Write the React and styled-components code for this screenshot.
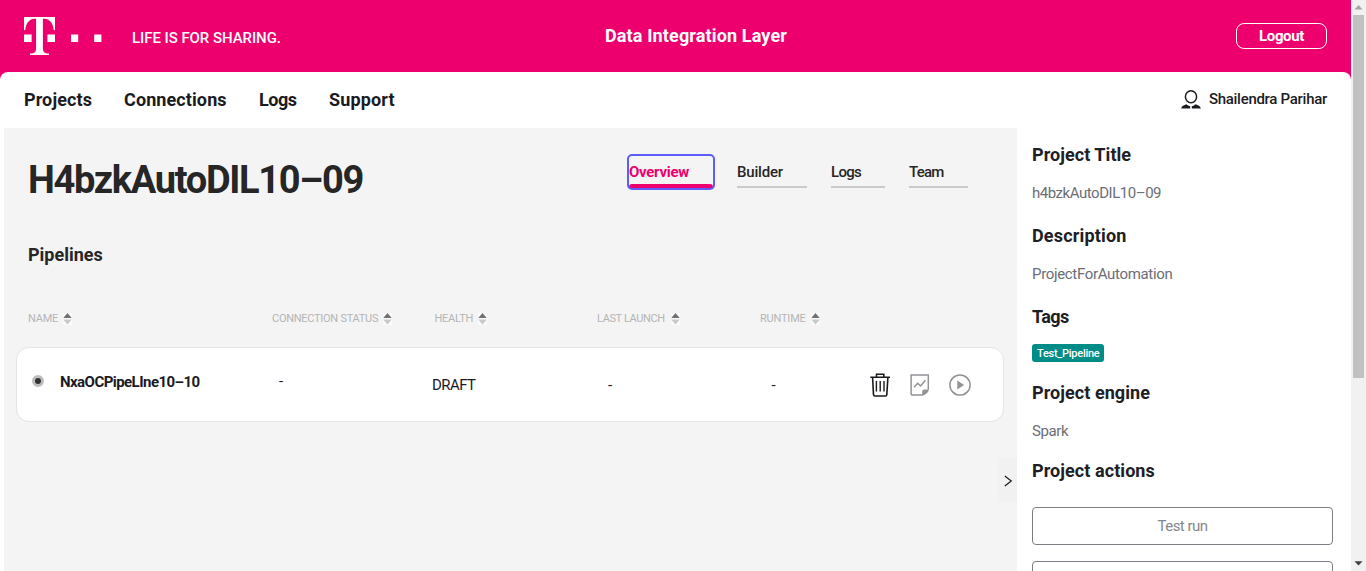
import React from "react";
import styled, { createGlobalStyle, css } from "styled-components";

const magenta = "#ed006e";
const ink = "#262626";

const GlobalStyle = createGlobalStyle`
  *, *::before, *::after { box-sizing: border-box; }
  body { margin: 0; background: #fff; overflow: hidden; font-family: Roboto, "Liberation Sans", sans-serif; color: ${ink}; }
  h1, h2, h3, p { margin: 0; }
  svg { display: block; flex: none; }
`;

const tracking = css`
  letter-spacing: ${(p) => p.$ls || 0}px;
  white-space: nowrap;
`;

const Page = styled.div`
  display: flex;
  width: 1366px;
  height: 571px;
  overflow: hidden;
`;
const Content = styled.div`
  flex: 1;
  display: flex;
  flex-direction: column;
  background: ${magenta};
`;

const Header = styled.header`
  display: grid;
  grid-template-columns: 1fr auto 1fr;
  align-items: center;
  height: 72px;
  padding: 0 24px;
  color: #fff;
`;
const Brand = styled.div`
  display: flex;
  align-items: center;
  gap: 30px;
`;
const Tagline = styled.span`
  font: 500 15px/20px Roboto, sans-serif;
  padding-top: 4px;
  ${tracking}
`;
const AppName = styled.h2`
  font-size: 18px;
  font-weight: 700;
  line-height: 24px;
  padding-left: 41px;
  ${tracking}
`;
const LogoutButton = styled.button`
  justify-self: end;
  width: 91px;
  height: 26px;
  padding: 0;
  border: 1px solid #fff;
  border-radius: 8px;
  background: none;
  color: #fff;
  font: 700 15px/20px Roboto, sans-serif;
  ${tracking}
`;

const Nav = styled.nav`
  display: flex;
  align-items: center;
  justify-content: space-between;
  height: 56px;
  padding: 0 24px;
  border-radius: 8px 8px 0 0;
  background: #fff;
  flex: none;
`;
const NavLinks = styled.div`
  display: flex;
`;
const NavLink = styled.a`
  width: ${(p) => p.$w}px;
  font-size: 18px;
  font-weight: 700;
  line-height: 24px;
  color: #1b1b1f;
  ${tracking}
`;
const User = styled.div`
  display: flex;
  align-items: center;
  gap: 8px;
`;
const UserName = styled.span`
  padding-bottom: 2px;
  font: 500 15px/20px Roboto, sans-serif;
  color: #1b1b1f;
  ${tracking}
`;

const Body = styled.div`
  flex: 1;
  min-height: 0;
  display: flex;
  padding-left: 4px;
  background: #fff;
`;
const Main = styled.main`
  width: 1013px;
  display: flex;
  flex-direction: column;
  background: #f4f4f4;
  padding: 28px 0 0;
`;
const TitleRow = styled.div`
  display: flex;
  justify-content: space-between;
  padding: 0 49px 0 24px;
`;
const ProjectName = styled.h1`
  font-size: 38px;
  font-weight: 700;
  line-height: 48px;
  ${tracking}
`;
const Tabs = styled.div`
  display: flex;
  align-items: flex-start;
  gap: 24px;
`;
const Tab = styled.a`
  width: ${(p) => p.$w}px;
  height: 32px;
  padding-top: 6px;
  border-bottom: 2px solid #cacaca;
  font: 500 15px/20px Roboto, sans-serif;
  ${tracking}
  ${(p) =>
    p.$active &&
    css`
      color: ${magenta};
      font-weight: 700;
      border: 0;
      border-radius: 3px;
      outline: 2px solid #5c5cff;
      display: flex;
      flex-direction: column;
      justify-content: space-between;
      &::after {
        content: "";
        height: 4px;
        border-radius: 3px 3px 0 0;
        background: ${magenta};
      }
    `}
`;
const SectionTitle = styled.h2`
  margin: 39px 0 0 24px;
  font-size: 18px;
  font-weight: 700;
  line-height: 24px;
  ${tracking}
`;
const TableHead = styled.div`
  display: grid;
  grid-template-columns: 244px 162.5px 162.5px 163px 1fr;
  margin: 45px 0 0 24px;
`;
const HeadCell = styled.div`
  display: flex;
  gap: ${(p) => p.$gap || 5}px;
  font-size: 11px;
  line-height: 14px;
  color: #b5b5b5;
  ${tracking}
`;
const SortBox = styled.span`
  display: block;
  width: 9px;
  height: 12px;
  margin-top: 1px;
  background: #fafafa;
`;
const Card = styled.div`
  display: grid;
  grid-template-columns: 28px 219px 153px 176px 163.5px 98.5px 1fr;
  align-items: center;
  width: 988px;
  height: 75px;
  margin: 21px 0 0 12px;
  padding: 0 20px 0 15px;
  border: 1px solid #e4e4e4;
  border-radius: 13px;
  background: #fff;
`;
const Status = styled.span`
  width: 12px;
  height: 12px;
  margin-bottom: 7px;
  border: 3px solid #bdbdbd;
  border-radius: 50%;
  background: #333;
`;
const PipelineName = styled.span`
  padding-bottom: 5px;
  font: 700 15px/20px Roboto, sans-serif;
  color: #1b1b1f;
  ${tracking}
`;
const Cell = styled.span`
  padding-bottom: ${(p) => (p.$raised ? 7 : 0)}px;
  font: 400 15px/20px Roboto, sans-serif;
  color: #1b1b1f;
  ${tracking}
`;
const Actions = styled.div`
  display: flex;
  align-items: center;
  gap: 19px;
`;
const Collapse = styled.button`
  align-self: flex-end;
  display: flex;
  align-items: center;
  width: 19px;
  height: 44px;
  margin-top: 36px;
  padding: 1px 0 0 6px;
  border: 0;
  background: #f1f1f1;
`;

const Side = styled.aside`
  flex: 1;
  display: flex;
  flex-direction: column;
  padding: 15px 18px 0 15px;
  overflow: hidden;
`;
const Heading = styled.h3`
  margin-top: ${(p) => p.$mt || 0}px;
  font-size: 18px;
  font-weight: 700;
  line-height: 24px;
  color: #202024;
  flex: none;
  ${tracking}
`;
const Value = styled.p`
  margin-top: 16px;
  font-size: 15px;
  line-height: 20px;
  color: #6c6e76;
  flex: none;
  ${tracking}
`;
const Tag = styled.span`
  align-self: flex-start;
  width: 72px;
  height: 18px;
  margin-top: 15px;
  padding: 3px 0 0 5px;
  border-radius: 3px;
  background: #008c87;
  color: #fff;
  font: 500 11px/14px Roboto, sans-serif;
  flex: none;
  ${tracking}
`;
const ActionButton = styled.button`
  height: 38px;
  margin-top: ${(p) => p.$mt}px;
  padding: 0;
  border: 1px solid #7c7e85;
  border-radius: 4px;
  background: #fff;
  color: #85868c;
  font: 400 15px/20px Roboto, sans-serif;
  flex: none;
  ${tracking}
`;

const Scrollbar = styled.div`
  width: 15px;
  display: flex;
  flex-direction: column;
  align-items: center;
  background: #f1f1f1;
`;
const Arrow = styled.div`
  display: flex;
  align-items: center;
  height: 15px;
`;
const Thumb = styled.div`
  width: 11px;
  height: 363px;
  margin-bottom: auto;
  background: #c1c1c1;
`;

const Logo = () => (
  <svg width="78" height="39" viewBox="0 0 78 39" fill="#fff">
    <path d="M0 0H31V13.3L29.7 13.1C29.2 6.8 26.5 2.2 20.4 1.7C19.9 1.6 19.3 1.7 18.9 1.8V30.5C18.9 35.2 20.2 36.4 25 36.6V38H6V36.6C10.8 36.4 12.1 35.2 12.1 30.5V1.8C11.7 1.7 11.1 1.6 10.6 1.7C4.5 2.2 1.8 6.8 1.3 13.1L0 13.3Z" />
    <path d="M0 17.5h7.6V25H0zM23.4 17.5H31V25h-7.6zM47 17.5h7.2V25H47zM70.2 17.5h7.2V25h-7.2z" />
  </svg>
);
const UserIcon = () => (
  <svg width="20" height="20" viewBox="0 0 20 20">
    <ellipse cx="10" cy="6.8" rx="5.6" ry="6" fill="none" stroke="#1b1b1f" strokeWidth="1.5" />
    <path d="M.2 18.4C.6 15.8 3.2 15.2 5.4 14.3C6.6 15.2 7.7 16 9.2 16.3V18.4ZM19.8 18.4C19.4 15.8 16.8 15.2 14.6 14.3C13.4 15.2 12.3 16 10.8 16.3V18.4Z" fill="#1b1b1f" />
  </svg>
);
const Sort = () => (
  <SortBox>
    <svg width="9" height="12" viewBox="0 0 9 12">
      <path d="M4.5 0L8.7 5H.3Z" fill="#707070" />
      <path d="M4.5 11.6L8.7 6.6H.3Z" fill="#c8c8c8" />
    </svg>
  </SortBox>
);
const TrashIcon = () => (
  <svg width="21" height="24" viewBox="0 0 21 24" fill="none" stroke="#1b1b1f" strokeWidth="1.6">
    <path d="M.3 4.3H20M6.5 4V1.3H13.8V4M2.6 4.5L3.5 21.6Q3.6 23 5 23H15.3Q16.7 23 16.8 21.6L17.9 4.5" />
    <path d="M6.4 8V18.6M10.2 8V18.6M14 8V18.6" strokeWidth="1.4" />
  </svg>
);
const ReportIcon = () => (
  <svg width="20" height="22" viewBox="0 0 20 22" fill="none" stroke="#919397" strokeWidth="1.5">
    <path d="M18.3 15.5V.9H1.1V19.2Q1.1 21.1 3 21.1H12.6" />
    <path d="M12.2 21.8V17.6Q12.2 15.6 14.2 15.6H19Q18.6 17.6 16.5 19.6T12.2 21.8Z" fill="#919397" stroke="none" />
    <path d="M4.1 13.3L7.7 9.3L10.6 12L15.4 6.2" />
  </svg>
);
const PlayIcon = () => (
  <svg width="22" height="22" viewBox="0 0 22 22">
    <circle cx="11" cy="11" r="10.1" fill="none" stroke="#919397" strokeWidth="1.5" />
    <path d="M8.3 6.6L15.1 11L8.3 15.4Z" fill="#919397" />
  </svg>
);

const navItems = [
  ["Projects", 100, 0.1],
  ["Connections", 135, 0.1],
  ["Logs", 70, -0.45],
  ["Support", 66, 0.15],
];
const tabs = [
  ["Overview", 84, -0.28],
  ["Builder", 70, -0.18],
  ["Logs", 54, -0.71],
  ["Team", 59, -0.75],
];
const columns = [
  ["NAME", -0.24, 5],
  ["CONNECTION STATUS", -0.27, 5],
  ["HEALTH", -0.25, 5],
  ["LAST LAUNCH", -0.37, 6],
  ["RUNTIME", -0.2, 5.5],
];

export default function App() {
  return (
    <Page>
      <GlobalStyle />
      <Content>
        <Header>
          <Brand>
            <Logo />
            <Tagline $ls={-0.06}>LIFE IS FOR SHARING.</Tagline>
          </Brand>
          <AppName $ls={0.14}>Data Integration Layer</AppName>
          <LogoutButton $ls={-0.35}>Logout</LogoutButton>
        </Header>
        <Nav>
          <NavLinks>
            {navItems.map(([label, w, ls]) => (
              <NavLink key={label} $w={w} $ls={ls}>{label}</NavLink>
            ))}
          </NavLinks>
          <User>
            <UserIcon />
            <UserName $ls={-0.29}>Shailendra Parihar</UserName>
          </User>
        </Nav>
        <Body>
          <Main>
            <TitleRow>
              <ProjectName $ls={-1.32}>H4bzkAutoDIL10–09</ProjectName>
              <Tabs>
                {tabs.map(([label, w, ls], i) => (
                  <Tab key={label} $w={w} $ls={ls} $active={i === 0}>{label}</Tab>
                ))}
              </Tabs>
            </TitleRow>
            <SectionTitle>Pipelines</SectionTitle>
            <TableHead>
              {columns.map(([label, ls, gap]) => (
                <HeadCell key={label} $ls={ls} $gap={gap}>
                  {label}
                  <Sort />
                </HeadCell>
              ))}
            </TableHead>
            <Card>
              <Status />
              <PipelineName $ls={-0.55}>NxaOCPipeLIne10–10</PipelineName>
              <Cell $raised>-</Cell>
              <Cell $ls={-0.55}>DRAFT</Cell>
              <Cell>-</Cell>
              <Cell>-</Cell>
              <Actions>
                <TrashIcon />
                <ReportIcon />
                <PlayIcon />
              </Actions>
            </Card>
            <Collapse aria-label="Collapse panel">
              <svg width="9" height="12" viewBox="0 0 9 12" fill="none" stroke="#1b1b1f" strokeWidth="1.2">
                <path d="M.8 1L7.3 6L.8 11" />
              </svg>
            </Collapse>
          </Main>
          <Side>
            <Heading $ls={0.05}>Project Title</Heading>
            <Value $ls={-0.46}>h4bzkAutoDIL10–09</Value>
            <Heading $mt={21} $ls={0.17}>Description</Heading>
            <Value $ls={-0.33}>ProjectForAutomation</Value>
            <Heading $mt={21} $ls={-0.6}>Tags</Heading>
            <Tag $ls={-0.26}>Test_Pipeline</Tag>
            <Heading $mt={19} $ls={0.06}>Project engine</Heading>
            <Value $ls={-0.4}>Spark</Value>
            <Heading $mt={18} $ls={0.07}>Project actions</Heading>
            <ActionButton $mt={24} $ls={-0.55}>Test run</ActionButton>
            <ActionButton $mt={16} />
          </Side>
        </Body>
      </Content>
      <Scrollbar>
        <Arrow>
          <svg width="9" height="5" viewBox="0 0 9 5"><path d="M4.5 0L8.5 4.5H.5Z" fill="#a3a3a3" /></svg>
        </Arrow>
        <Thumb />
        <Arrow>
          <svg width="9" height="5" viewBox="0 0 9 5"><path d="M.5 .3H8.5L4.5 4.6Z" fill="#404040" /></svg>
        </Arrow>
      </Scrollbar>
    </Page>
  );
}
